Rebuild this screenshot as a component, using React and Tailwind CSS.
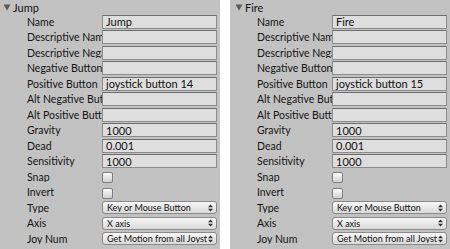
import React from "react";

const font = { fontFamily: "Lato, 'Open Sans', 'Liberation Sans', sans-serif" };

const TextField = ({ value }) => (
    <div className="flex h-[14px] w-[115px] items-center overflow-hidden border border-[#8c8c8c] border-t-[#6e6e6e] bg-[#dedede] pl-[3px] text-[11px] leading-none text-[#111]">
        {value}
    </div>
);

const Checkbox = () => (
    <div className="mt-[2px] h-[11px] w-[11px] rounded-[2px] border border-[#7d7d7d] bg-gradient-to-b from-[#fafafa] to-[#d2d2d2]" />
);

const Select = ({ value }) => (
    <div className="flex h-[13px] w-[115px] items-center justify-between overflow-hidden rounded-[3px] border border-[#8a8a8a] bg-gradient-to-b from-[#f7f7f7] to-[#dadada] pl-[4px] pr-[3px] text-[9px] leading-none text-[#111]">
        <span className="overflow-hidden whitespace-nowrap">{value}</span>
        <svg width="5" height="8" viewBox="0 0 5 8" className="ml-[1px] shrink-0">
            <path d="M0 3.2 L2.5 0.5 L5 3.2 Z" fill="#333" />
            <path d="M0 4.8 L2.5 7.5 L5 4.8 Z" fill="#333" />
        </svg>
    </div>
);

const Row = ({ label, children }) => (
    <div className="flex h-[15.5px] items-center">
        <div className="w-[102px] shrink-0 overflow-hidden whitespace-nowrap pl-[27px] text-[10.5px] leading-none text-[#141414]">
            {label}
        </div>
        {children}
    </div>
);

const AxisPanel = ({ name, button, offset }) => (
    <div className="h-[249px] w-[220px] shrink-0 overflow-hidden bg-[#c2c2c2]" style={font}>
        <div className="flex h-[14px] items-center text-[11px] leading-none text-[#141414]" style={{ paddingLeft: offset }}>
            <svg width="8" height="7" viewBox="0 0 8 7" className="mr-[2px]">
                <path d="M0.5 0.5 L7.5 0.5 L4 6.5 Z" fill="#5a5a5a" />
            </svg>
            {name}
        </div>
        <Row label="Name"><TextField value={name} /></Row>
        <Row label="Descriptive Name"><TextField /></Row>
        <Row label="Descriptive Negative Name"><TextField /></Row>
        <Row label="Negative Button"><TextField /></Row>
        <Row label="Positive Button"><TextField value={button} /></Row>
        <Row label="Alt Negative Button"><TextField /></Row>
        <Row label="Alt Positive Button"><TextField /></Row>
        <Row label="Gravity"><TextField value="1000" /></Row>
        <Row label="Dead"><TextField value="0.001" /></Row>
        <Row label="Sensitivity"><TextField value="1000" /></Row>
        <Row label="Snap"><Checkbox /></Row>
        <Row label="Invert"><Checkbox /></Row>
        <Row label="Type"><Select value="Key or Mouse Button" /></Row>
        <Row label="Axis"><Select value="X axis" /></Row>
        <Row label="Joy Num"><Select value="Get Motion from all Joysticks" /></Row>
    </div>
);

export default function App() {
    return (
        <div className="flex h-[249px] w-[450px] overflow-hidden bg-white">
            <AxisPanel name="Jump" button="joystick button 14" offset={3} />
            <div className="w-[10px] shrink-0 bg-white" />
            <AxisPanel name="Fire" button="joystick button 15" offset={5} />
        </div>
    );
}
